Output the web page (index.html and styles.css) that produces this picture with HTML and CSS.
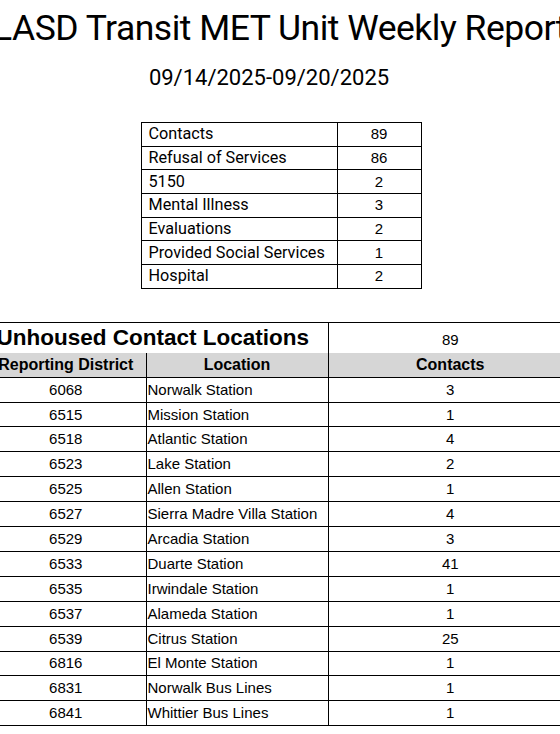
FILE: index.html
```html
<!DOCTYPE html>
<html>
<head>
<meta charset="utf-8">
<link rel="stylesheet" href="styles.css">
</head>
<body>
<div class="page">
  <h1 class="title">LASD Transit MET Unit Weekly Report</h1>
  <div class="dates">09/14/2025-09/20/2025</div>

  <table class="summary">
    <tr><td class="lbl">Contacts</td><td class="num">89</td></tr>
    <tr><td class="lbl">Refusal of Services</td><td class="num">86</td></tr>
    <tr><td class="lbl">5150</td><td class="num">2</td></tr>
    <tr><td class="lbl">Mental Illness</td><td class="num">3</td></tr>
    <tr><td class="lbl">Evaluations</td><td class="num">2</td></tr>
    <tr><td class="lbl">Provided Social Services</td><td class="num">1</td></tr>
    <tr><td class="lbl">Hospital</td><td class="num">2</td></tr>
  </table>

  <table class="locations">
    <colgroup><col class="c1"><col class="c2"><col class="c3"></colgroup>
    <tr class="caption-row"><td colspan="2" class="cap">Unhoused Contact Locations</td><td class="total">89</td></tr>
    <tr class="head"><th>Reporting District</th><th>Location</th><th>Contacts</th></tr>
    <tr><td class="rd">6068</td><td class="loc">Norwalk Station</td><td class="cnt">3</td></tr>
    <tr><td class="rd">6515</td><td class="loc">Mission Station</td><td class="cnt">1</td></tr>
    <tr><td class="rd">6518</td><td class="loc">Atlantic Station</td><td class="cnt">4</td></tr>
    <tr><td class="rd">6523</td><td class="loc">Lake Station</td><td class="cnt">2</td></tr>
    <tr><td class="rd">6525</td><td class="loc">Allen Station</td><td class="cnt">1</td></tr>
    <tr><td class="rd">6527</td><td class="loc">Sierra Madre Villa Station</td><td class="cnt">4</td></tr>
    <tr><td class="rd">6529</td><td class="loc">Arcadia Station</td><td class="cnt">3</td></tr>
    <tr><td class="rd">6533</td><td class="loc">Duarte Station</td><td class="cnt">41</td></tr>
    <tr><td class="rd">6535</td><td class="loc">Irwindale Station</td><td class="cnt">1</td></tr>
    <tr><td class="rd">6537</td><td class="loc">Alameda Station</td><td class="cnt">1</td></tr>
    <tr><td class="rd">6539</td><td class="loc">Citrus Station</td><td class="cnt">25</td></tr>
    <tr><td class="rd">6816</td><td class="loc">El Monte Station</td><td class="cnt">1</td></tr>
    <tr><td class="rd">6831</td><td class="loc">Norwalk Bus Lines</td><td class="cnt">1</td></tr>
    <tr><td class="rd">6841</td><td class="loc">Whittier Bus Lines</td><td class="cnt">1</td></tr>
  </table>
</div>
</body>
</html>
```

FILE: styles.css
```css
html, body {
  margin: 0;
  padding: 0;
  background: #ffffff;
  overflow: hidden;
}
body {
  width: 560px;
  height: 734px;
  color: #000;
  font-family: Roboto, "Liberation Sans", sans-serif;
}
.page {
  display: flex;
  flex-direction: column;
  align-items: center;
  width: 560px;
}
.title {
  margin: 0;
  padding-top: 6px;
  font-size: 35.5px;
  letter-spacing: -0.5px;
  font-weight: 400;
  line-height: 44px;
  white-space: nowrap;
  text-align: center;
}
.dates {
  margin-top: 15px;
  margin-right: 22px;
  font-size: 22px;
  line-height: 26px;
  white-space: nowrap;
}
.summary {
  margin-top: 31px;
  margin-left: 2px;
  border-collapse: collapse;
  font-size: 16.2px;
}
.summary td {
  border: 1px solid #000;
  height: 22.7px;
  padding: 0;
  line-height: 18px;
}
.summary .lbl {
  width: 188px;
  padding-left: 7px;
}
.summary .num {
  width: 83px;
  text-align: center;
  font-family: "Liberation Sans", Arial, sans-serif;
  font-size: 15px;
}
.locations {
  align-self: flex-start;
  margin-top: 33px;
  margin-left: -14px;
  border-collapse: collapse;
  table-layout: fixed;
  width: 586px;
  font-family: "Liberation Sans", Arial, sans-serif;
  font-size: 15px;
}
.locations .c1 { width: 160px; }
.locations .c2 { width: 182px; }
.locations .c3 { width: 244px; }
.locations td, .locations th {
  padding: 0;
  height: 23.9px;
  line-height: 18px;
  border-top: 1px solid #000;
  border-bottom: 1px solid #000;
  border-left: 1px solid #000;
  white-space: nowrap;
}
.locations tr > :first-child { border-left: none; }
.caption-row td {
  height: 30px;
  border-bottom: none;
}
.cap {
  font-size: 22.5px;
  font-weight: 700;
  text-align: center;
  vertical-align: middle;
  padding-right: 8px !important;
}
.caption-row .total {
  height: 26px;
  text-align: center;
  vertical-align: bottom;
  padding-bottom: 4px;
}
.head th {
  background: #d6d6d6;
  font-size: 16px;
  font-weight: 700;
  text-align: center;
  border-top: none;
}
.rd, .cnt { text-align: center; }
.loc { text-align: left; padding-left: 1px !important; }
```
